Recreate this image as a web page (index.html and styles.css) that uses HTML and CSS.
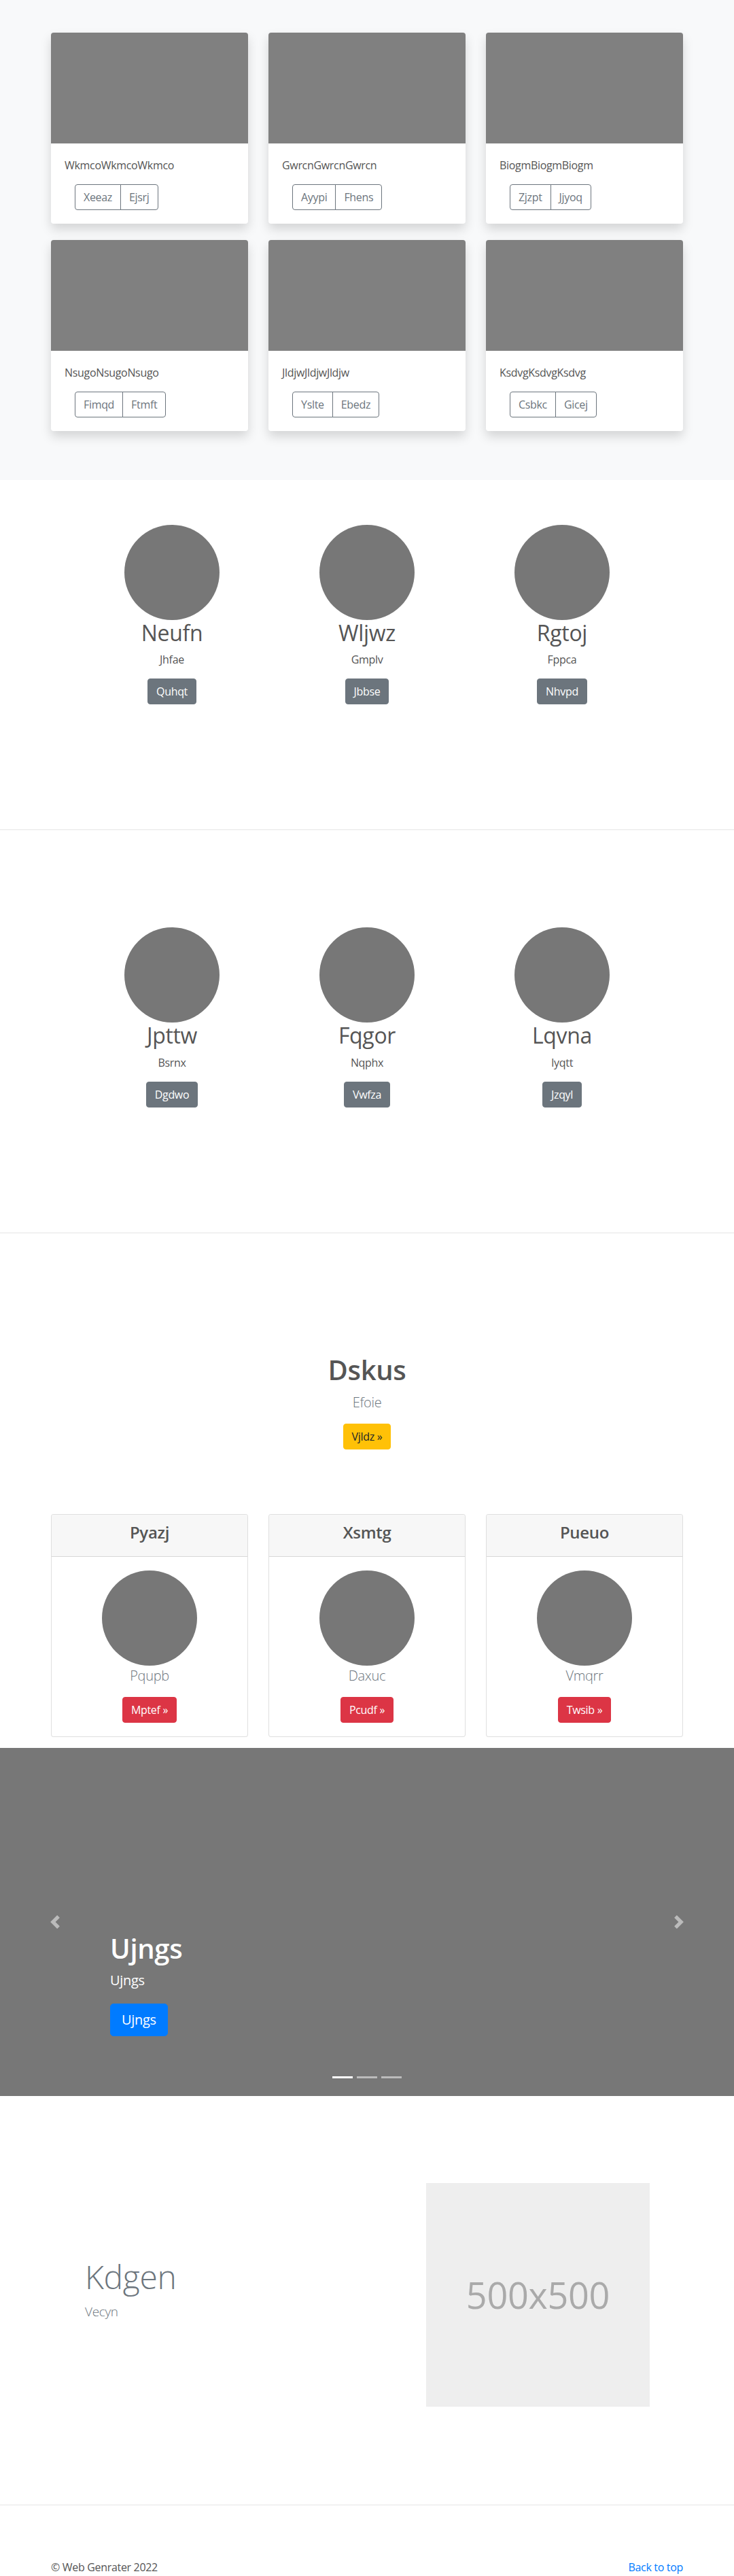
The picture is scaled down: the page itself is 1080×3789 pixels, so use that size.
FILE: index.html
```html
<!DOCTYPE html>
<html lang="en">
<head>
<meta charset="utf-8">
<title>Web Genrater</title>
<link rel="stylesheet" href="styles.css">
</head>
<body>
<main>
  <section class="album">
    <div class="container grid3 album-grid">
      <div class="card">
        <div class="card-img"></div>
        <div class="card-body">
          <p class="card-text">WkmcoWkmcoWkmco</p>
          <div class="btn-group"><a href="#" class="btn btn-outline">Xeeaz</a><a href="#" class="btn btn-outline">Ejsrj</a></div>
        </div>
      </div>
      <div class="card">
        <div class="card-img"></div>
        <div class="card-body">
          <p class="card-text">GwrcnGwrcnGwrcn</p>
          <div class="btn-group"><a href="#" class="btn btn-outline">Ayypi</a><a href="#" class="btn btn-outline">Fhens</a></div>
        </div>
      </div>
      <div class="card">
        <div class="card-img"></div>
        <div class="card-body">
          <p class="card-text">BiogmBiogmBiogm</p>
          <div class="btn-group"><a href="#" class="btn btn-outline">Zjzpt</a><a href="#" class="btn btn-outline">Jjyoq</a></div>
        </div>
      </div>
      <div class="card">
        <div class="card-img"></div>
        <div class="card-body">
          <p class="card-text">NsugoNsugoNsugo</p>
          <div class="btn-group"><a href="#" class="btn btn-outline">Fimqd</a><a href="#" class="btn btn-outline">Ftmft</a></div>
        </div>
      </div>
      <div class="card">
        <div class="card-img"></div>
        <div class="card-body">
          <p class="card-text">JldjwJldjwJldjw</p>
          <div class="btn-group"><a href="#" class="btn btn-outline">Yslte</a><a href="#" class="btn btn-outline">Ebedz</a></div>
        </div>
      </div>
      <div class="card">
        <div class="card-img"></div>
        <div class="card-body">
          <p class="card-text">KsdvgKsdvgKsdvg</p>
          <div class="btn-group"><a href="#" class="btn btn-outline">Csbkc</a><a href="#" class="btn btn-outline">Gicej</a></div>
        </div>
      </div>
    </div>
  </section>

  <section class="team team-first">
    <div class="team-row">
      <div class="member">
        <div class="avatar"></div>
        <h2 class="member-name">Neufn</h2>
        <p class="member-role">Jhfae</p>
        <p class="member-action"><a href="#" class="btn btn-secondary">Quhqt</a></p>
      </div>
      <div class="member">
        <div class="avatar"></div>
        <h2 class="member-name">Wljwz</h2>
        <p class="member-role">Gmplv</p>
        <p class="member-action"><a href="#" class="btn btn-secondary">Jbbse</a></p>
      </div>
      <div class="member">
        <div class="avatar"></div>
        <h2 class="member-name">Rgtoj</h2>
        <p class="member-role">Fppca</p>
        <p class="member-action"><a href="#" class="btn btn-secondary">Nhvpd</a></p>
      </div>
    </div>
  </section>

  <section class="team team-second">
    <div class="team-row">
      <div class="member">
        <div class="avatar"></div>
        <h2 class="member-name">Jpttw</h2>
        <p class="member-role">Bsrnx</p>
        <p class="member-action"><a href="#" class="btn btn-secondary">Dgdwo</a></p>
      </div>
      <div class="member">
        <div class="avatar"></div>
        <h2 class="member-name">Fqgor</h2>
        <p class="member-role">Nqphx</p>
        <p class="member-action"><a href="#" class="btn btn-secondary">Vwfza</a></p>
      </div>
      <div class="member">
        <div class="avatar"></div>
        <h2 class="member-name">Lqvna</h2>
        <p class="member-role">Iyqtt</p>
        <p class="member-action"><a href="#" class="btn btn-secondary">Jzqyl</a></p>
      </div>
    </div>
  </section>

  <section class="pricing-section">
    <div class="hero">
      <h1 class="hero-title">Dskus</h1>
      <p class="hero-lead">Efoie</p>
      <p class="hero-action"><a href="#" class="btn btn-warning">Vjldz »</a></p>
    </div>
    <div class="container grid3">
      <div class="price-card">
        <div class="price-header"><h4 class="price-title">Pyazj</h4></div>
        <div class="price-body">
          <div class="avatar"></div>
          <p class="price-lead">Pqupb</p>
          <a href="#" class="btn btn-danger">Mptef »</a>
        </div>
      </div>
      <div class="price-card">
        <div class="price-header"><h4 class="price-title">Xsmtg</h4></div>
        <div class="price-body">
          <div class="avatar"></div>
          <p class="price-lead">Daxuc</p>
          <a href="#" class="btn btn-danger">Pcudf »</a>
        </div>
      </div>
      <div class="price-card">
        <div class="price-header"><h4 class="price-title">Pueuo</h4></div>
        <div class="price-body">
          <div class="avatar"></div>
          <p class="price-lead">Vmqrr</p>
          <a href="#" class="btn btn-danger">Twsib »</a>
        </div>
      </div>
    </div>
  </section>

  <section class="carousel">
    <div class="carousel-caption">
      <h1 class="caption-title">Ujngs</h1>
      <p class="caption-text">Ujngs</p>
      <p class="caption-action"><a href="#" class="btn btn-lg btn-primary">Ujngs</a></p>
    </div>
    <a href="#" class="carousel-control control-prev" aria-label="Previous">
      <svg width="20" height="20" viewBox="0 0 8 8" fill="#fff"><path d="M5.25 0l-4 4 4 4 1.5-1.5L4.25 4l2.5-2.5L5.25 0z"/></svg>
    </a>
    <a href="#" class="carousel-control control-next" aria-label="Next">
      <svg width="20" height="20" viewBox="0 0 8 8" fill="#fff"><path d="M2.75 0l-1.5 1.5L3.75 4l-2.5 2.5L2.75 8l4-4-4-4z"/></svg>
    </a>
    <ol class="carousel-indicators">
      <li class="active"></li>
      <li></li>
      <li></li>
    </ol>
  </section>

  <section class="featurette">
    <div class="container featurette-row">
      <div class="featurette-text">
        <h2 class="featurette-heading">Kdgen</h2>
        <p class="featurette-lead">Vecyn</p>
      </div>
      <div class="featurette-image">500x500</div>
    </div>
  </section>
</main>

<footer class="footer">
  <div class="container footer-row">
    <p class="footer-copy">© Web Genrater 2022</p>
    <p class="footer-top"><a href="#">Back to top</a></p>
  </div>
</footer>
</body>
</html>
```

FILE: styles.css
```css
* {
  box-sizing: border-box;
}

html,
body {
  margin: 0;
  padding: 0;
}

body {
  font-family: "Open Sans", "Noto Sans", "DejaVu Sans", sans-serif;
  font-size: 16px;
  line-height: 1.5;
  letter-spacing: -0.02em;
  color: #555;
  background: #fff;
}

h1, h2, h4, p, ol {
  margin: 0;
}

.container {
  width: 930px;
  margin: 0 auto;
}

.grid3 {
  display: grid;
  grid-template-columns: repeat(3, 290px);
  column-gap: 30px;
}

/* Buttons */
.btn {
  display: inline-block;
  font-family: inherit;
  font-size: 16px;
  line-height: 24px;
  padding: 6px 12px;
  border: 1px solid transparent;
  border-radius: 4px;
  text-decoration: none;
  text-align: center;
  white-space: nowrap;
  vertical-align: middle;
}

.btn-outline {
  color: #6c757d;
  border-color: #6c757d;
  background: transparent;
}

.btn-secondary {
  color: #fff;
  background: #6c757d;
  border-color: #6c757d;
}

.btn-warning {
  color: #212529;
  background: #ffc107;
  border-color: #ffc107;
}

.btn-danger {
  color: #fff;
  background: #dc3545;
  border-color: #dc3545;
}

.btn-primary {
  color: #fff;
  background: #007bff;
  border-color: #007bff;
}

.btn-lg {
  font-size: 20px;
  line-height: 30px;
  padding: 8px 16px;
  border-radius: 5px;
}

.btn-group {
  display: inline-flex;
  margin-left: 15px;
}

.btn-group .btn + .btn {
  margin-left: -1px;
}

.btn-group .btn:first-child {
  border-top-right-radius: 0;
  border-bottom-right-radius: 0;
}

.btn-group .btn:last-child {
  border-top-left-radius: 0;
  border-bottom-left-radius: 0;
}

/* Album */
.album {
  background: #f8f9fa;
  padding: 48px 0 72px;
}

.album-grid {
  row-gap: 24px;
}

.card {
  background: #fff;
  border-radius: 4px;
  overflow: hidden;
  box-shadow: 0 8px 16px rgba(0, 0, 0, 0.15);
}

.card-img {
  height: 163px;
  background: #808080;
}

.card-body {
  padding: 20px;
}

.card-text {
  margin-bottom: 16px;
}

/* Team */
.team {
  border-bottom: 1px solid #e5e5e5;
}

.team-first {
  padding: 66px 0 168px;
}

.team-second {
  padding: 143px 0 168px;
}

.team-row {
  display: grid;
  grid-template-columns: repeat(3, 287px);
  justify-content: center;
  text-align: center;
}

.avatar {
  width: 140px;
  height: 140px;
  border-radius: 50%;
  background: #777;
  margin: 0 auto;
}

.member-name {
  font-size: 32px;
  line-height: 1.2;
  font-weight: 400;
  margin-bottom: 8px;
}

.member-role {
  margin-bottom: 16px;
}

.member-action {
  margin-bottom: 16px;
}

/* Hero + pricing */
.pricing-section {
  padding-bottom: 16px;
}

.hero {
  padding: 177px 0 95px;
  text-align: center;
}

.hero-title {
  font-size: 40px;
  line-height: 48px;
  font-weight: 600;
  margin-bottom: 9px;
  color: #555;
}

.hero-lead {
  font-size: 20px;
  line-height: 30px;
  font-weight: 300;
  color: #6c757d;
  margin-bottom: 16px;
}

.price-card {
  border: 1px solid rgba(0, 0, 0, 0.125);
  border-radius: 4px;
  overflow: hidden;
  background: #fff;
}

.price-header {
  background: #f7f7f7;
  border-bottom: 1px solid rgba(0, 0, 0, 0.125);
  padding: 12px 20px;
  text-align: center;
}

.price-title {
  font-size: 24px;
  line-height: 28.8px;
  font-weight: 600;
  margin-bottom: 8px;
  color: #555;
}

.price-body {
  padding: 20px;
  text-align: center;
}

.price-lead {
  font-size: 20px;
  line-height: 30px;
  font-weight: 300;
  color: #6c757d;
  margin-bottom: 16px;
}

/* Carousel */
.carousel {
  position: relative;
  height: 512px;
  background: #777;
  overflow: hidden;
}

.carousel-caption {
  position: absolute;
  left: 15%;
  right: 15%;
  bottom: 48px;
  padding: 20px 0;
  color: #fff;
  text-align: left;
  z-index: 10;
}

.caption-title {
  font-size: 40px;
  line-height: 48px;
  font-weight: 600;
  margin-bottom: 8px;
}

.caption-text {
  font-size: 20px;
  line-height: 30px;
  margin-bottom: 19px;
}

.caption-action {
  margin-bottom: 20px;
}

.carousel-control {
  position: absolute;
  top: 0;
  bottom: 0;
  width: 15%;
  display: flex;
  align-items: center;
  justify-content: center;
  opacity: 0.5;
}

.control-prev {
  left: 0;
}

.control-next {
  right: 0;
}

.carousel-indicators {
  position: absolute;
  left: 0;
  right: 0;
  bottom: 0;
  margin: 0 0 16px;
  padding: 0;
  list-style: none;
  display: flex;
  justify-content: center;
  z-index: 15;
}

.carousel-indicators li {
  box-sizing: content-box;
  width: 30px;
  height: 3px;
  margin: 0 3px;
  background: #fff;
  background-clip: padding-box;
  border-top: 10px solid transparent;
  border-bottom: 10px solid transparent;
  opacity: 0.5;
}

.carousel-indicators li.active {
  opacity: 1;
}

/* Featurette */
.featurette {
  padding: 128px 0 144px;
  border-bottom: 1px solid #e5e5e5;
}

.featurette-row {
  display: flex;
  align-items: center;
  justify-content: space-between;
  padding: 0 49px 0 50px;
}

.featurette-heading {
  font-size: 48px;
  line-height: 1.2;
  font-weight: 300;
  color: #6c757d;
  margin-bottom: 8px;
}

.featurette-lead {
  font-size: 19px;
  line-height: 28px;
  font-weight: 300;
  color: #6c757d;
  margin-bottom: 16px;
}

.featurette-image {
  width: 329px;
  height: 329px;
  background: #eee;
  color: #aaa;
  font-size: 54px;
  display: flex;
  align-items: center;
  justify-content: center;
}

/* Footer */
.footer {
  padding: 79px 0 48px;
}

.footer-row {
  display: flex;
  justify-content: space-between;
}

.footer-copy {
  color: #555;
}

.footer-top a {
  color: #007bff;
  text-decoration: none;
}
```
